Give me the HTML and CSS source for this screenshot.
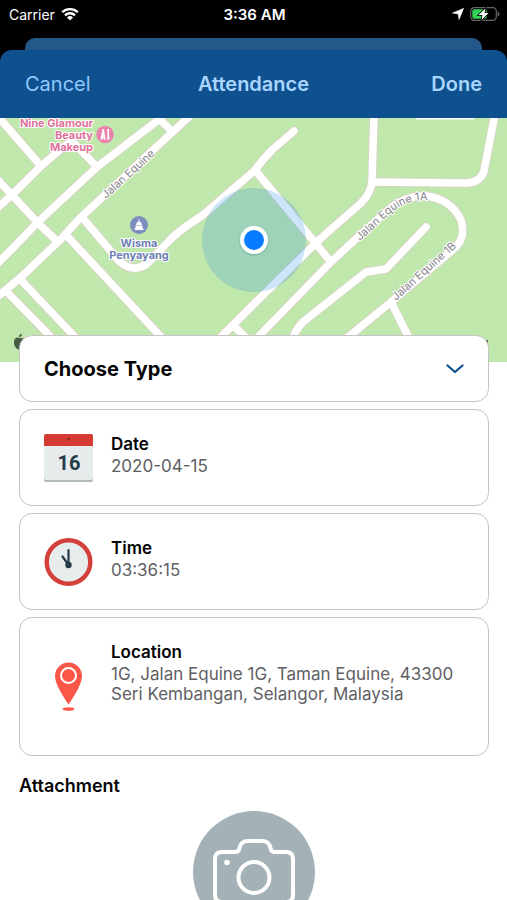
FILE: index.html
```html
<!DOCTYPE html>
<html lang="en">
<head>
<meta charset="utf-8">
<meta name="viewport" content="width=device-width, initial-scale=1">
<title>Attendance</title>
<link rel="stylesheet" href="styles.css">
</head>
<body>
<div class="statusbar">
  <div class="status-left">
    <span>Carrier</span>
    <svg width="18" height="14" viewBox="0 0 18 14" aria-hidden="true">
      <path d="M1.2 5.2a11.4 11.4 0 0 1 15.6 0M4 8.3a7.2 7.2 0 0 1 10 0" fill="none" stroke="#fff" stroke-width="2.4"/>
      <path d="M9 13.6l-3-3.1a4.3 4.3 0 0 1 6 0z" fill="#fff"/>
    </svg>
  </div>
  <strong class="clock">3:36 AM</strong>
  <div class="status-right">
    <svg width="12" height="12" viewBox="0 0 12 12" aria-hidden="true"><path d="M11.6.4L7 11.4 6.3 6 .6 5z" fill="#fff" stroke="#fff" stroke-width=".6" stroke-linejoin="round"/></svg>
    <svg width="30" height="14" viewBox="0 0 30 14" aria-hidden="true">
      <rect x=".7" y=".7" width="25.600" height="12.600" rx="3.600" fill="none" stroke="#666" stroke-width="1.200"/>
      <path d="M27.600 4.600v5q2-.6 2-2.500t-2-2.500z" fill="#666"/>
      <rect x="2.300" y="2.300" width="14.500" height="9.400" rx="2" fill="#34d158"/>
      <path d="M15.500 1.500L8.500 8h4L11.500 13l7-7h-4z" fill="#fff" stroke="#000" stroke-width="1.600" paint-order="stroke"/>
    </svg>
  </div>
</div>
<div class="sheet-behind"></div>
<header class="navbar">
  <button type="button" class="nav-button nav-cancel">Cancel</button>
  <h1>Attendance</h1>
  <button type="button" class="nav-button nav-done">Done</button>
</header>
<main>
  <svg class="map" viewBox="0 118 507 244" preserveAspectRatio="xMidYMid slice" role="img" aria-label="Map of your location">
    <defs>
      <g id="roads" fill="none" stroke-linejoin="round" stroke-linecap="butt">
        <path d="M-4 114L40 165M-4 209L12 195L40 167L62 148L72 141L97 167"/>
        <path d="M-4 178L12 195L38 223L58 242M67 236L162 338"/>
        <path d="M-4 265L12 249L38 222L97 167L157 121L164 114M157 117L172 131"/>
        <path d="M192 114L166 138L120 181L80 218L60 240L20 278L-4 298"/>
        <path d="M81 216L103 242L120 262Q133 273 147 264L168 242Q178 231 203 215Q228 193 254 171"/>
        <path d="M18 277L76 338M6 291L52 338"/>
        <path stroke-linecap="round" d="M294 131L273 149Q263 159 255 170"/>
        <path d="M255 170L331 262"/>
        <path d="M374 114L372 182Q371 193 361 203L320 239L253 305L220 338"/>
        <path d="M372 182L466 183Q480 183 484 171L495 114"/>
        <path d="M257 338L331 262L360 235L386 212Q404 195 426 196Q451 199 461 220Q466 236 456 247L391 302L347 338M391 302L409 338"/>
        <path stroke-linecap="round" d="M426 227L386 269L366 272L303 322Q296 329 293 338"/>
        <path d="M232 324L246 338"/>
      </g>
    </defs>
    <rect y="118" width="507" height="244" fill="#c1e8ac"/>
    <use href="#roads" stroke="#dccfc8" stroke-width="9"/>
    <use href="#roads" stroke="#fff" stroke-width="7.500"/>
    <path d="M416 118.500H474" stroke="#fff" stroke-width="2"/>
    <circle cx="254" cy="240" r="52" fill="#2f91e8" fill-opacity=".24"/>
    <circle cx="254" cy="241" r="15" fill="#397f6b" fill-opacity=".18"/>
    <circle cx="254" cy="240" r="14" fill="#fff"/>
    <circle cx="254" cy="240" r="10" fill="#087cff"/>
    <path id="street-main" d="M106 199L157 153" fill="none"/>
    <path id="street-a" d="M360 241L386 217Q404 200 426 200" fill="none"/>
    <path id="street-b" d="M396 301L460 244" fill="none"/>
    <g class="street">
      <text><textPath href="#street-main">Jalan Equine</textPath></text>
      <text><textPath href="#street-a">Jalan Equine 1A</textPath></text>
      <text><textPath href="#street-b">Jalan Equine 1B</textPath></text>
    </g>
    <g class="place shop" text-anchor="end">
      <text x="93" y="127">Nine Glamour</text>
      <text x="93" y="139">Beauty</text>
      <text x="93" y="151">Makeup</text>
    </g>
    <circle cx="105" cy="134.500" r="8.700" fill="#ea83ac"/>
    <path d="M102.500 129h1.500l.6 5 1 5.500h-1.800l-.7-3-.8 3h-1.800zM107.300 129h1.700v5l.6 5.500h-2.600l.5-5z" fill="#fff"/>
    <circle cx="139" cy="225" r="9" fill="#7d8fbe"/>
    <path d="M134.500 230v-1.500h1v-3h7v3h1v1.500zM136 225q0-3 2.500-3.600V219.500h1v1.900q2.500.6 2.500 3.600z" fill="#fff"/>
    <g class="place civic" text-anchor="middle">
      <text x="139" y="247">Wisma</text>
      <text x="139" y="259">Penyayang</text>
    </g>
    <path d="M20 338q-5-2-6 3-.5 6 4 8.500h6v-11zM19 337q0-3 3-3 0 3-3 3z" fill="#4a5b43"/>
    <path d="M487 340v6" stroke="#58674f" stroke-width="2"/>
  </svg>
  <form class="details">
    <div class="card type-card">
      <select class="type-select" aria-label="Attendance type">
        <option>Choose Type</option>
      </select>
      <svg class="chevron" width="18" height="10" viewBox="0 0 18 10" aria-hidden="true"><path d="M1.500 1.500L9 8l7.500-6.500" fill="none" stroke="#0d4f8f" stroke-width="2.200" stroke-linecap="round" stroke-linejoin="round"/></svg>
    </div>
    <section class="card">
      <svg width="49" height="48" viewBox="0 0 49 48" aria-hidden="true">
        <rect y="2" width="49" height="46" rx="2" fill="#b1b9ba"/>
        <rect y="2" width="49" height="44" rx="2" fill="#e6ebec"/>
        <path d="M0 12V2q0-2 2-2h45q2 0 2 2v10z" fill="#d63b33"/>
        <circle cx="24.500" cy="5" r="1.500" fill="#9c2723"/>
        <text class="calendar-day" x="25" y="36" text-anchor="middle">16</text>
      </svg>
      <div class="card-text">
        <h2>Date</h2>
        <p>2020-04-15</p>
      </div>
    </section>
    <section class="card">
      <svg width="49" height="48" viewBox="0 0 49 48" aria-hidden="true">
        <circle cx="24.500" cy="24" r="21.800" fill="#e7eced" stroke="#d3403a" stroke-width="4.400"/>
        <path d="M24.500 27V12M24.500 27l-6-8.500" stroke="#263b49" stroke-width="2.200" stroke-linecap="round"/>
        <circle cx="24.500" cy="27" r="3.200" fill="#263b49"/>
      </svg>
      <div class="card-text">
        <h2>Time</h2>
        <p>03:36:15</p>
      </div>
    </section>
    <section class="card location-card">
      <svg width="49" height="49" viewBox="0 0 49 49" aria-hidden="true">
        <path d="M24.500 42.500Q11 23 11 14a13.500 13.500 0 0 1 27 0q0 9-13.500 28.500z" fill="#fb5748"/>
        <circle cx="24.500" cy="13.500" r="7.500" fill="none" stroke="#fff" stroke-width="2"/>
        <ellipse cx="24.500" cy="47" rx="6" ry="1.700" fill="#fb5748"/>
      </svg>
      <div class="card-text">
        <h2>Location</h2>
        <p>1G, Jalan Equine 1G, Taman Equine, 43300 Seri Kembangan, Selangor, Malaysia</p>
      </div>
    </section>
    <h2 class="attachment-title">Attachment</h2>
    <button type="button" class="camera" aria-label="Add photo">
      <svg width="122" height="122" viewBox="0 0 122 122" aria-hidden="true">
        <g fill="none" stroke="#fff" stroke-width="4">
          <path d="M29 41h13q4 0 4.500-4 1.500-7 8.500-7h14q7 0 8.500 7 .5 4 4.500 4h11q7 0 7 7v36q0 7-7 7H29q-7 0-7-7V48q0-7 7-7z"/>
          <circle cx="61" cy="66.500" r="15.500"/>
        </g>
        <circle cx="34" cy="51.500" r="2.800" fill="#fff"/>
      </svg>
    </button>
  </form>
</main>
</body>
</html>
```

FILE: styles.css
```css
* {
  box-sizing: border-box;
}

html {
  background: #fff;
  scrollbar-width: none;
}

body {
  margin: 0;
  color: #050505;
  font-family: Inter, "Liberation Sans", sans-serif;
  background: linear-gradient(#000 0 80px, #fff 80px);
}

h1, h2, p {
  margin: 0;
}

svg {
  display: block;
  flex: none;
}

.statusbar {
  display: grid;
  grid-template-columns: 1fr auto 1fr;
  align-items: center;
  height: 28px;
  margin-bottom: 10px;
  padding: 0 7px 0 9px;
  color: #fff;
  font-size: 14px;
}

.status-left, .status-right {
  display: flex;
  align-items: center;
  gap: 6px;
}

.status-right {
  justify-content: flex-end;
}

.clock {
  font-size: 15px;
  font-weight: 600;
}

.sheet-behind {
  height: 12px;
  margin: 0 25px;
  border-radius: 10px 10px 0 0;
  background: #24588a;
}

.navbar {
  display: grid;
  grid-template-columns: 1fr auto 1fr;
  align-items: center;
  height: 68px;
  padding: 0 25px;
  border-radius: 12px 12px 0 0;
  background: #0f518f;
  color: #a9d6ff;
}

.navbar h1 {
  font-size: 20px;
  font-weight: 600;
}

.nav-button {
  padding: 0;
  border: 0;
  background: none;
  color: #8fc8ff;
  font: 400 20px Inter, "Liberation Sans", sans-serif;
}

.nav-cancel {
  justify-self: start;
}

.nav-done {
  justify-self: end;
  color: #a9d6ff;
  font-weight: 600;
}

.map {
  width: 100%;
  height: 244px;
}

.street text {
  fill: #85838a;
  font-size: 11px;
}

.street text, .place text {
  stroke: #fff;
  stroke-width: 2px;
  stroke-linejoin: round;
  paint-order: stroke;
}

.place text {
  font-size: 11px;
  font-weight: 700;
}

.shop text {
  fill: #e0719c;
}

.civic text {
  fill: #6d7fb4;
}

.details {
  position: relative;
  display: flex;
  flex-direction: column;
  gap: 7px;
  margin-top: -27px;
  padding: 0 18px 24px 19px;
}

.card {
  display: flex;
  align-items: center;
  gap: 18px;
  min-height: 97px;
  padding: 23px 24px;
  border: 1px solid #c4c4c6;
  border-radius: 13px;
  background: #fff;
}

.type-card {
  position: relative;
  min-height: 67px;
  padding: 0;
}

.type-select {
  width: 100%;
  height: 64px;
  padding: 0 24px;
  border: 0;
  border-radius: 13px;
  appearance: none;
  background: transparent;
  color: #050505;
  font: 700 20px Inter, "Liberation Sans", sans-serif;
}

.chevron {
  position: absolute;
  right: 24px;
  pointer-events: none;
}

.card-text {
  align-self: flex-start;
}

.card h2 {
  font-size: 17px;
  font-weight: 600;
  line-height: 22px;
}

.card p {
  margin-top: 1px;
  color: #606064;
  font-size: 17px;
  line-height: 20px;
}

.calendar-day {
  fill: #263b49;
  font: 700 20px Roboto, sans-serif;
}

.location-card {
  min-height: 139px;
}

.attachment-title {
  margin-top: 12px;
  font-size: 18px;
  font-weight: 600;
  line-height: 22px;
}

.camera {
  align-self: center;
  margin-top: 7px;
  padding: 0;
  border: 0;
  border-radius: 50%;
  background: #a4b2b7;
}
```
